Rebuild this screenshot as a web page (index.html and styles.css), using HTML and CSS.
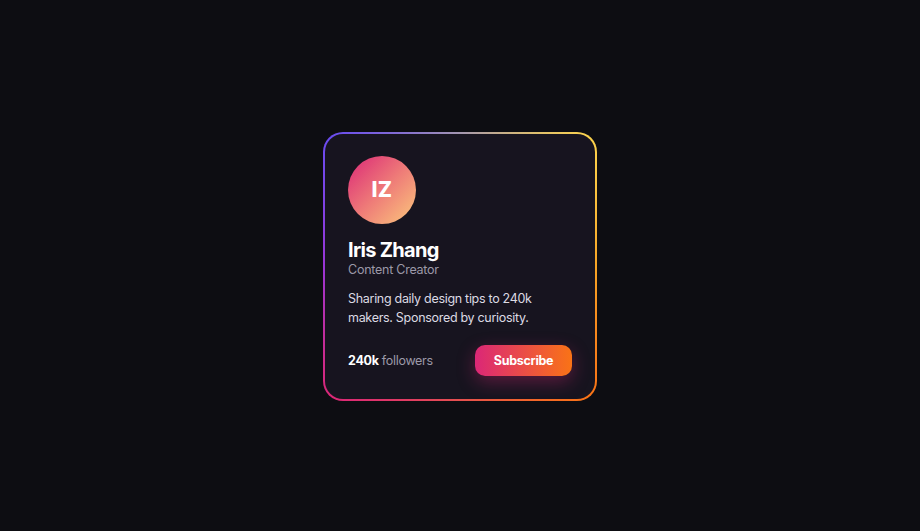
FILE: index.html
```html
<!DOCTYPE html>
<html lang="en">
<head>
<meta charset="utf-8">
<title>Profile card</title>
<link rel="stylesheet" href="styles.css">
</head>
<body>
<main class="stage">
  <article class="card">
    <div class="avatar">IZ</div>
    <h1 class="name">Iris Zhang</h1>
    <p class="role">Content Creator</p>
    <p class="bio">Sharing daily design tips to 240k makers. Sponsored by curiosity.</p>
    <div class="footer">
      <span class="followers"><strong>240k</strong> followers</span>
      <button class="subscribe" type="button">Subscribe</button>
    </div>
  </article>
</main>
</body>
</html>
```
FILE: styles.css
```css
* { box-sizing: border-box; }
html, body { margin: 0; padding: 0; }
body {
  background: #0d0d12;
  font-family: Inter, "Noto Sans", "Liberation Sans", sans-serif;
  color: #fff;
}
.stage {
  width: 920px;
  height: 531px;
  display: flex;
  align-items: center;
  justify-content: center;
}
.card {
  width: 274px;
  height: 269px;
  margin-top: 1px;
  border: 2px solid transparent;
  border-radius: 20px;
  padding: 22px 23px 23px 23px;
  background:
    linear-gradient(#17141f, #17141f) padding-box,
    conic-gradient(from 0deg, #a396b0 0deg, #fcd34d 45deg, #f7a425 90deg, #f97316 135deg, #e6504f 180deg, #db2777 225deg, #9a35d6 270deg, #6a4cf0 315deg, #a396b0 360deg) border-box;
  display: flex;
  flex-direction: column;
}
.avatar {
  width: 68px;
  height: 68px;
  border-radius: 50%;
  background: linear-gradient(135deg, #db2777 0%, #ee7a78 50%, #fcc97c 100%);
  display: flex;
  align-items: center;
  justify-content: center;
  font-weight: 800;
  font-size: 21px;
  letter-spacing: 0.3px;
  color: #fff;
}
.name {
  margin: 15px 0 0;
  font-size: 20px;
  line-height: 22px;
  font-weight: 700;
  letter-spacing: -0.7px;
}
.role {
  margin: 0;
  font-size: 12.5px;
  line-height: 18px;
  letter-spacing: -0.25px;
  color: #9c99a8;
}
.bio {
  margin: 10px 0 0;
  font-size: 12.5px;
  line-height: 19px;
  letter-spacing: -0.3px;
  color: #dcdae3;
  padding-right: 20px;
}
.footer {
  margin-top: auto;
  display: flex;
  align-items: center;
  justify-content: space-between;
}
.followers {
  font-size: 12.5px;
  letter-spacing: -0.3px;
  color: #9c99a8;
}
.followers strong {
  color: #fff;
  font-weight: 700;
}
.subscribe {
  height: 31px;
  width: 97px;
  padding: 0;
  border: 0;
  border-radius: 10px;
  background: linear-gradient(90deg, #db2777, #f97316);
  color: #fff;
  font-family: inherit;
  font-size: 12.5px;
  letter-spacing: -0.3px;
  font-weight: 700;
  box-shadow: 0 6px 18px rgba(219, 39, 119, 0.35);
  cursor: pointer;
}
```
